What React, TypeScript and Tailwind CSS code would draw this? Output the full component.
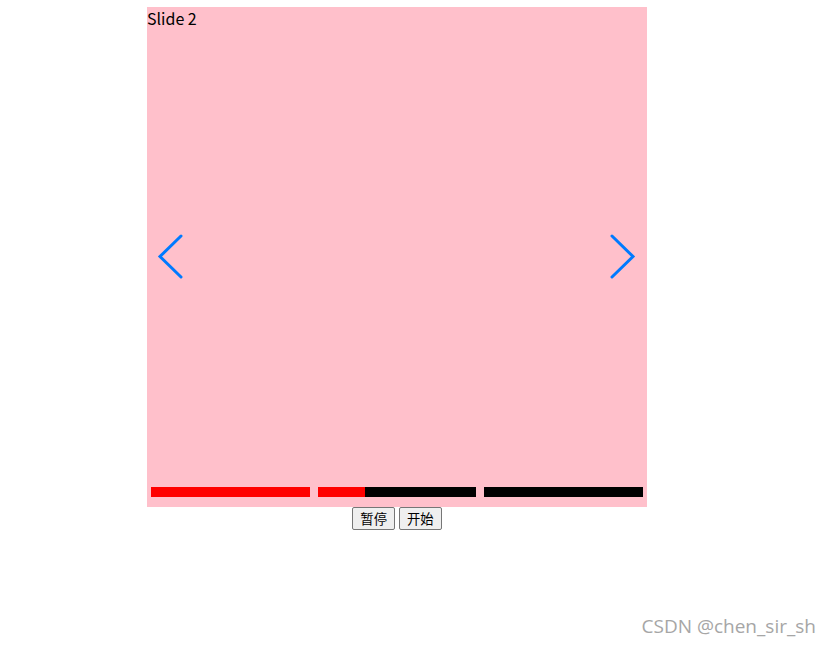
const slides = [{ progress: 100 }, { progress: 30 }, { progress: 0 }];

function Chevron({ dir }: { dir: "left" | "right" }) {
    return (
        <svg width="26" height="46" viewBox="0 0 26 46" fill="none">
            <polyline
                points={dir === "left" ? "24,2 3,22.5 24,43" : "2,2 23,22.5 2,43"}
                stroke="#007aff"
                strokeWidth="3"
                strokeLinecap="round"
                strokeLinejoin="miter"
            />
        </svg>
    );
}

export default function App() {
    return (
        <div className="relative h-[646px] w-[831px] bg-white font-['Noto_Sans_CJK_SC','Noto_Sans',sans-serif] text-black">
            <div className="pl-[147px] pt-[7px]">
                <div className="relative flex h-[500px] w-[500px] flex-col justify-between bg-[#ffc0cb]">
                    <div className="text-[16px] leading-[22px]">Slide 2</div>

                    <button className="absolute left-[10px] top-[234px] -translate-y-[7px] p-0">
                        <Chevron dir="left" />
                    </button>
                    <button className="absolute right-[11px] top-[234px] -translate-y-[7px] p-0">
                        <Chevron dir="right" />
                    </button>

                    <div className="mb-[10px] flex gap-2 px-1">
                        {slides.map((s, i) => (
                            <div key={i} className="h-[10px] flex-1 bg-black">
                                <div className="h-full bg-[#ff0000]" style={{ width: `${s.progress}%` }} />
                            </div>
                        ))}
                    </div>
                </div>
                <div className="flex w-[500px] justify-center gap-[4px]">
                    <button className="h-[23px] rounded-[2px] border border-[#767676] bg-[#efefef] px-[7px] text-[13.33px] leading-[19px]">
                        暂停
                    </button>
                    <button className="h-[23px] rounded-[2px] border border-[#767676] bg-[#efefef] px-[7px] text-[13.33px] leading-[19px]">
                        开始
                    </button>
                </div>
            </div>

            <div className="absolute bottom-[6px] right-[15px] font-['Open_Sans',sans-serif] text-[19px] text-[#a6a6a6]">
                CSDN @chen_sir_sh
            </div>
        </div>
    );
}
